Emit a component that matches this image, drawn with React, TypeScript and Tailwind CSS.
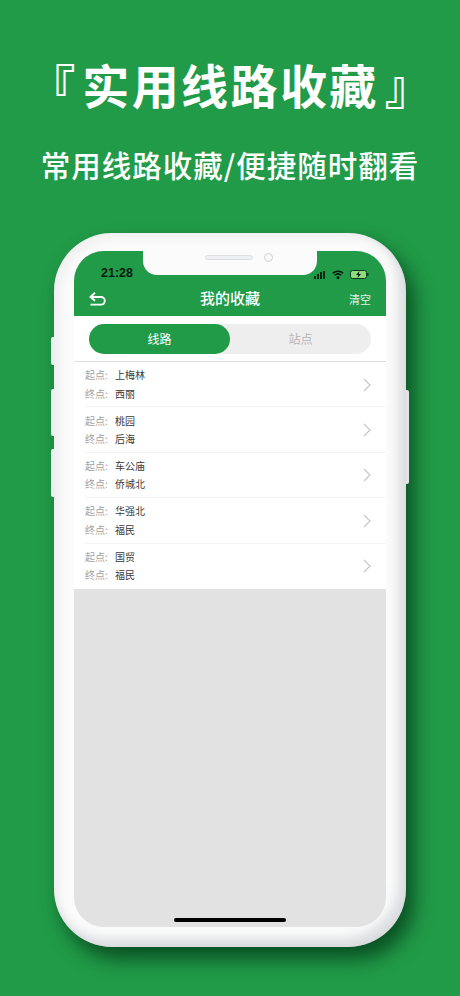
import React from "react";

const rows = [
  ["上梅林", "西丽"],
  ["桃园", "后海"],
  ["车公庙", "侨城北"],
  ["华强北", "福民"],
  ["国贸", "福民"],
];

function Row({ from, to, last }: { from: string; to: string; last: boolean }) {
  return (
    <div className="relative flex h-[45.4px] items-center bg-white pl-[11px] pr-[15px]">
      <div className="flex flex-1 flex-col gap-[4px] text-[10px] leading-[14.5px]">
        <div className="flex">
          <span className="w-[30px] text-[#a0a0a0]">起点:</span>
          <span className="text-[#3a3a3a]">{from}</span>
        </div>
        <div className="flex">
          <span className="w-[30px] text-[#a0a0a0]">终点:</span>
          <span className="text-[#3a3a3a]">{to}</span>
        </div>
      </div>
      <svg width="8" height="14" viewBox="0 0 8 14" fill="none" stroke="#c4c4c4" strokeWidth="1.1">
        <path d="M1 1l6 6-6 6" />
      </svg>
      {!last && <div className="absolute bottom-0 left-[11px] right-0 h-px bg-[#f4f4f4]" />}
    </div>
  );
}

export default function App() {
  return (
    <div
      className="flex h-[996px] w-[460px] flex-col items-center overflow-hidden bg-[#219b48] text-white"
      style={{ fontFamily: '"Noto Sans CJK SC", "Noto Sans", sans-serif' }}
    >
      <div className="mt-[48px] flex h-[72px] items-center text-[47px] font-bold leading-[72px] whitespace-nowrap">
        <span className="mr-[7px]">『</span>
        <span className="tracking-[2.4px]">实用线路收藏</span>
        <span className="ml-[6px]">』</span>
      </div>
      <div className="mt-[21px] h-[46px] text-[29.5px] font-medium leading-[46px] tracking-[1px] whitespace-nowrap">
        常用线路收藏/便捷随时翻看
      </div>

      <div className="relative mt-[46px] h-[714px] w-[352px] rounded-[58px] bg-[#fbfbfb] px-[20px] pb-[20px] pt-[18px] shadow-[inset_-7px_-8px_12px_rgba(140,145,155,0.3),inset_5px_5px_10px_rgba(215,216,222,0.3),8px_12px_20px_rgba(0,45,18,0.7)]">
        <div className="absolute left-[-3px] top-[104px] h-[28px] w-[3px] rounded-l-[2px] bg-[#eceef0]" />
        <div className="absolute left-[-3px] top-[156px] h-[47px] w-[3px] rounded-l-[2px] bg-[#eceef0]" />
        <div className="absolute left-[-3px] top-[216px] h-[48px] w-[3px] rounded-l-[2px] bg-[#eceef0]" />
        <div className="absolute right-[-3px] top-[157px] h-[94px] w-[3px] rounded-r-[2px] bg-[#e2e4e8]" />

        <div className="relative flex h-[676px] w-[312px] flex-col overflow-hidden rounded-[30px] bg-[#e2e2e2]">
          <div className="relative h-[65px] shrink-0 bg-[#219b48]">
            <div className="flex h-[32px] items-end justify-between pl-[27px] pr-[17px]">
              <span
                className="text-[12.5px] font-semibold leading-[20px] text-[#0a1a10]"
                style={{ fontFamily: '"Liberation Sans", sans-serif' }}
              >
                21:28
              </span>
              <div className="mb-[4px] flex items-center gap-[6px]">
                <svg width="12" height="8" viewBox="0 0 12 8" fill="#0a2a15">
                  <rect x="0" y="5" width="2" height="3" />
                  <rect x="3" y="3" width="2" height="5" />
                  <rect x="6" y="1" width="2" height="7" />
                  <rect x="9" y="0" width="2" height="8" />
                </svg>
                <svg width="12" height="9" viewBox="0 0 12 9" fill="none" stroke="#0a1a10" strokeWidth="1.6">
                  <path d="M0.8 3.2c3-2.6 7.4-2.6 10.4 0" />
                  <path d="M2.7 5.2c2-1.6 4.6-1.6 6.6 0" />
                  <circle cx="6" cy="7.6" r="0.7" fill="#0a1a10" />
                </svg>
                <svg width="19" height="9" viewBox="0 0 19 9">
                  <rect x="0.5" y="0.5" width="16" height="8" rx="2" fill="#8fdc7f" stroke="#0c3a1c" />
                  <rect x="17.2" y="3" width="1.3" height="3" fill="#0c3a1c" />
                  <path d="M9.5 1L6 5h2.2L7.5 8 11 4H8.8z" fill="#0a1a10" />
                </svg>
              </div>
            </div>
            <div className="relative flex h-[33px] items-start justify-center pt-[5px] text-[15px] leading-[20px]">
              <svg className="absolute left-[15px] top-[9px]" width="17" height="15" viewBox="0 0 17 15" fill="none" stroke="#ffffff" strokeWidth="1.9">
                <path d="M1.5 5h10.5a3.6 3.6 0 0 1 0 7.6H1.5" />
                <path d="M6 0.8L1.5 5 6 8.8" />
              </svg>
              <span className="font-medium">我的收藏</span>
              <span className="absolute right-[15px] top-[6px] text-[11px] leading-[20px] text-[#e3f3e8]">清空</span>
            </div>
          </div>

          <div className="h-[46px] shrink-0 border-b border-[#dfdfdf] bg-white px-[15px] pt-[8px]">
            <div className="flex h-[30px] rounded-[15px] bg-[#eeeeee] text-[12px] leading-[30px]">
              <div className="w-[141px] rounded-[15px] bg-[#219b48] text-center text-white">线路</div>
              <div className="flex-1 text-center text-[#b5b5b5]">站点</div>
            </div>
          </div>

          <div className="flex flex-col">
            {rows.map((r, i) => (
              <Row key={i} from={r[0]} to={r[1]} last={i === rows.length - 1} />
            ))}
          </div>

          <div className="absolute bottom-[5px] left-[100px] h-[4px] w-[112px] rounded-full bg-black" />
        </div>

        <div className="absolute left-[89px] top-[18px] h-[24px] w-[174px] rounded-b-[14px] bg-[#fbfbfc]">
          <div className="absolute left-[62px] top-[4px] h-[5px] w-[48px] rounded-full border border-[#dcdee2] bg-[#eef0f2]" />
          <div className="absolute left-[121px] top-[2px] h-[9px] w-[9px] rounded-full border border-[#cfd1d4] bg-[#f8f8f8]" />
        </div>
      </div>
    </div>
  );
}
